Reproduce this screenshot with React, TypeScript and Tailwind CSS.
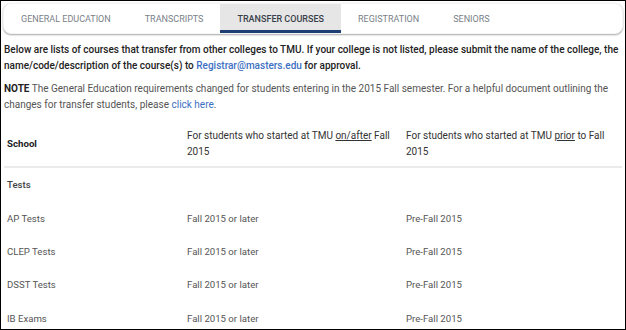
import React from 'react';

const tabs = ['General Education', 'Transcripts', 'Transfer Courses', 'Registration', 'Seniors'];
const active = 'Transfer Courses';

const rows = ['AP Tests', 'CLEP Tests', 'DSST Tests', 'IB Exams'];

export default function App() {
  return (
    <div
      className="w-[626px] h-[330px] overflow-hidden border border-black bg-white text-[10px] leading-[16px]"
      style={{ fontFamily: 'Roboto, "Liberation Sans", sans-serif' }}
    >
      <div className="mx-[2px] mt-[2px] flex h-[31px] rounded-lg border border-gray-100 bg-white shadow-[0_1px_2px_rgba(0,0,0,0.35)] overflow-hidden">
        {tabs.map((t) => (
          <div
            key={t}
            className={`flex items-center px-[17px] uppercase text-[9px] ${
              t === active
                ? 'bg-[#e6e6e6] text-[#3a3f4a] font-medium border-b-[3px] border-[#1e3f73] pt-[3px]'
                : 'text-[#7a7f88]'
            }`}
          >
            {t}
          </div>
        ))}
      </div>

      <div className="px-[3px] pt-[8px]">
        <p className="text-[#222] font-medium">
          Below are lists of courses that transfer from other colleges to TMU. If your college is not listed, please
          submit the name of the college, the name/code/description of the course(s) to{' '}
          <span className="text-[#3d6fc2]">Registrar@masters.edu</span> for approval.
        </p>
        <p className="mt-[7px] text-[#555]">
          <span className="font-bold text-[#222]">NOTE</span> The General Education requirements changed for students
          entering in the 2015 Fall semester. For a helpful document outlining the changes for transfer students,
          please <span className="text-[#3d6fc2]">click here</span>.
        </p>

        <table className="mt-[8px] w-[618px] table-fixed border-collapse">
          <colgroup>
            <col className="w-[180px]" />
            <col className="w-[219px]" />
            <col />
          </colgroup>
          <thead>
            <tr className="border-b-2 border-[#ebebeb]">
              <th className="h-[46px] pl-[3px] pr-[10px] text-left text-[9.7px] font-bold text-[#222]">School</th>
              <th className="pl-[3px] pr-[10px] text-left text-[10px] font-normal text-[#333]">
                For students who started at TMU <span className="underline">on/after</span> Fall 2015
              </th>
              <th className="pl-[3px] pr-[10px] text-left text-[10px] font-normal text-[#333]">
                For students who started at TMU <span className="underline">prior</span> to Fall 2015
              </th>
            </tr>
          </thead>
          <tbody className="text-[#555] text-[9.6px]">
            <tr>
              <td className="h-[35px] pl-[3px] font-medium text-[#444]">Tests</td>
              <td />
              <td />
            </tr>
            {rows.map((r) => (
              <tr key={r}>
                <td className="h-[33.4px] pl-[3px]">{r}</td>
                <td className="pl-[3px]">Fall 2015 or later</td>
                <td className="pl-[3px]">Pre-Fall 2015</td>
              </tr>
            ))}
          </tbody>
        </table>
      </div>
    </div>
  );
}
